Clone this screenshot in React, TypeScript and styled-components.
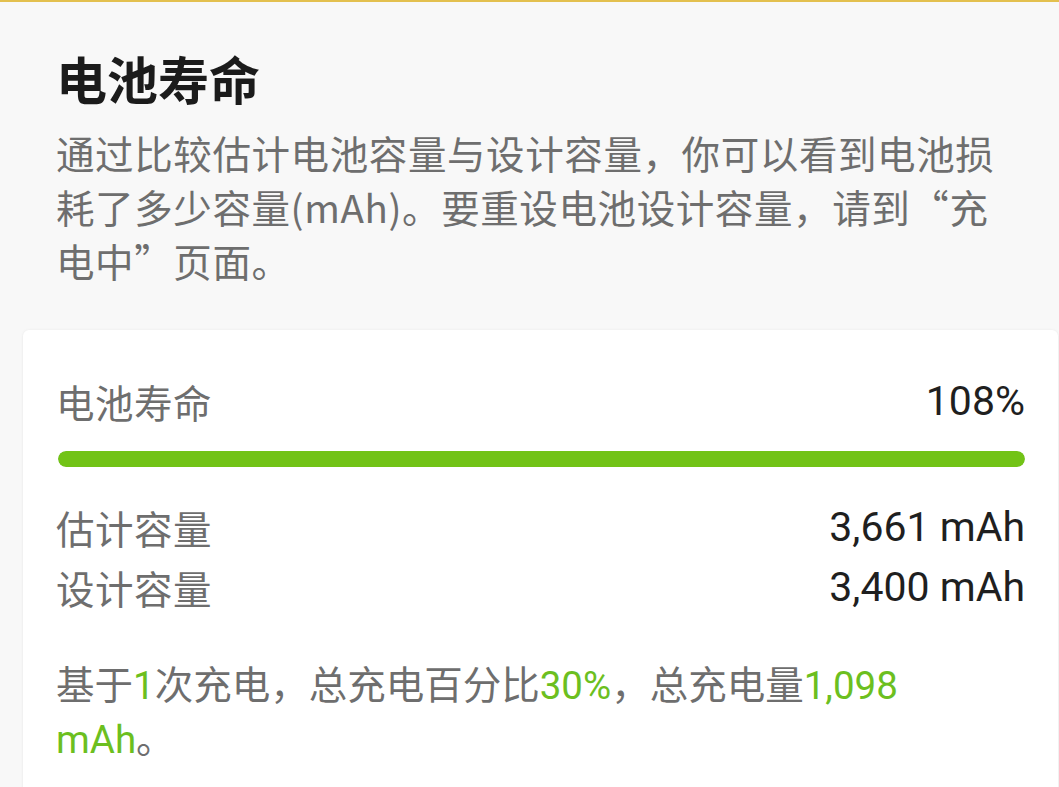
import React from "react";
import styled, { createGlobalStyle } from "styled-components";

const GlobalStyle = createGlobalStyle`
  html, body {
    margin: 0;
    padding: 0;
    background: #f8f8f8;
  }
  body {
    font-family: Roboto, "Noto Sans CJK SC", "Noto Sans", sans-serif;
    overflow: hidden;
  }
`;

const Page = styled.div`
  width: 1059px;
  height: 787px;
  box-sizing: border-box;
  border-top: 2px solid #e3c04e;
  background: #f8f8f8;
  overflow: hidden;
  display: flex;
  flex-direction: column;
`;

const Header = styled.div`
  padding: 46px 40px 0 56px;
`;

const Title = styled.h1`
  margin: 0;
  font-size: 51px;
  line-height: 60px;
  font-weight: 700;
  color: #1b1b1b;
  font-family: "Noto Sans CJK SC", sans-serif;
`;

const Description = styled.p`
  margin: 17px 0 0 0;
  font-size: 38.5px;
  line-height: 54px;
  color: #6e6e6e;
  font-family: "Noto Sans CJK SC", sans-serif;
  letter-spacing: 0.6px;
`;

const Card = styled.div`
  margin: 43px 1px 0 23px;
  background: #ffffff;
  border-radius: 6px;
  box-shadow: 0 0 3px rgba(0, 0, 0, 0.06), 0 1px 2px rgba(0, 0, 0, 0.04);
  padding: 46px 33px 40px 33px;
  flex: 1;
`;

const Row = styled.div<{ $lh: number }>`
  display: flex;
  justify-content: space-between;
  align-items: center;
  line-height: ${(p) => p.$lh}px;
  font-size: 38.5px;
`;

const Label = styled.span`
  color: #6e6e6e;
  font-family: "Noto Sans CJK SC", sans-serif;
  letter-spacing: 0.5px;
`;

const Value = styled.span`
  color: #1f1f1f;
  font-size: 41px;
  font-family: Roboto, "Noto Sans CJK SC", sans-serif;
`;

const Track = styled.div`
  margin: 25px 0 0 2px;
  height: 16px;
  border-radius: 8px;
  background: #e8e8e8;
  overflow: hidden;
`;

const Fill = styled.div`
  height: 100%;
  border-radius: 8px;
  background: #72c316;
`;

const Rows = styled.div`
  margin-top: 30px;
`;

const Footer = styled.p`
  margin: 42px 0 0 0;
  font-size: 38.5px;
  line-height: 54px;
  color: #6e6e6e;
  font-family: Roboto, "Noto Sans CJK SC", sans-serif;
  padding-right: 100px;
`;

const Green = styled.span`
  color: #6cbf1f;
`;

export default function App() {
  const health = 108;
  return (
    <>
      <GlobalStyle />
      <Page>
        <Header>
          <Title>电池寿命</Title>
          <Description>
            通过比较估计电池容量与设计容量，你可以看到电池损耗了多少容量(mAh)。要重设电池设计容量，请到“充电中”页面。
          </Description>
        </Header>
        <Card>
          <Row $lh={50}>
            <Label>电池寿命</Label>
            <Value>{health}%</Value>
          </Row>
          <Track>
            <Fill style={{ width: `${Math.min(health, 100)}%` }} />
          </Track>
          <Rows>
            <Row $lh={60}>
              <Label>估计容量</Label>
              <Value>3,661 mAh</Value>
            </Row>
            <Row $lh={60}>
              <Label>设计容量</Label>
              <Value>3,400 mAh</Value>
            </Row>
          </Rows>
          <Footer>
            基于<Green>1</Green>次充电，总充电百分比<Green>30%</Green>，总充电量<Green>1,098 mAh</Green>。
          </Footer>
        </Card>
      </Page>
    </>
  );
}
